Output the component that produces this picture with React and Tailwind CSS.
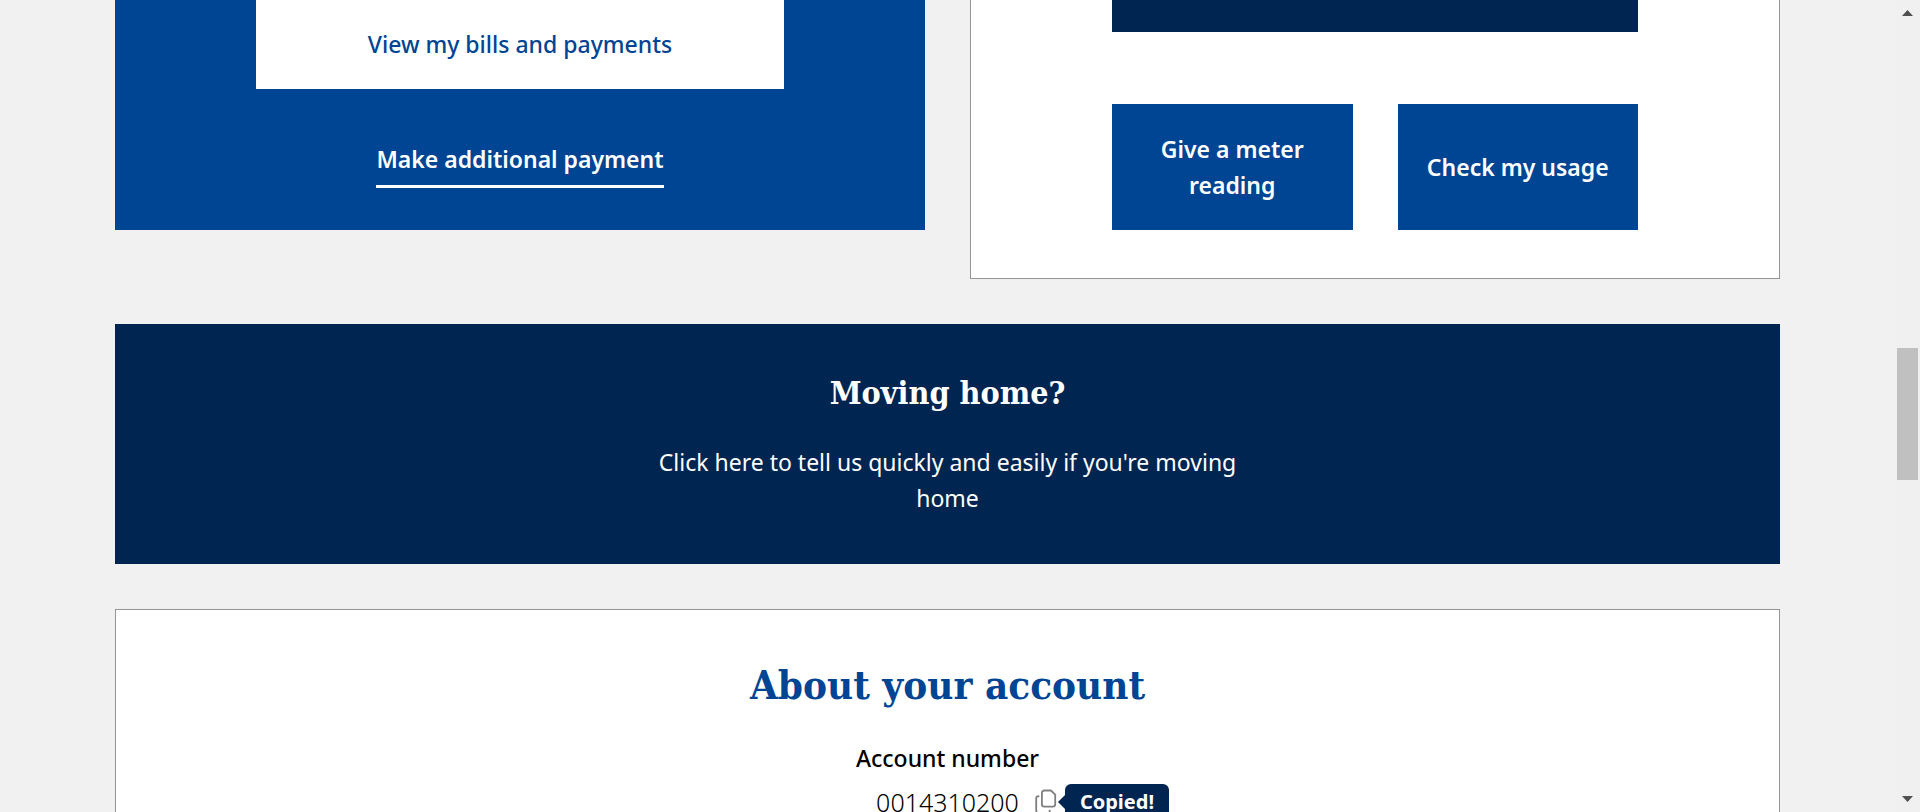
const HEADING = "font-['DejaVu_Serif_Condensed','DejaVu_Serif',serif] font-bold";

function UsageButton({ children }) {
  return (
    <button
      type="button"
      className="cursor-pointer bg-[#004494] px-4 py-[27px] font-semibold text-white"
    >
      {children}
    </button>
  );
}

function CopyIcon() {
  return (
    <svg
      viewBox="0 0 22 26"
      className="h-[26px] w-[22px]"
      fill="none"
      stroke="#808080"
      strokeWidth="1.8"
      strokeLinejoin="round"
      strokeLinecap="round"
      aria-hidden="true"
    >
      <path d="M9.300 1.500h6.700l4.200 4.200v9.500a2.400 2.400 0 0 1-2.400 2.400H9.300a2.400 2.400 0 0 1-2.400-2.400V3.900a2.400 2.400 0 0 1 2.400-2.400z" />
      <path d="M3.600 7.200A2.400 2.400 0 0 0 1.200 9.600v12a2.400 2.400 0 0 0 2.400 2.400h8.800a2.400 2.400 0 0 0 2.400-2.400" />
    </svg>
  );
}

function Scrollbar() {
  return (
    <div className="flex w-[25px] shrink-0 flex-col items-center justify-between bg-[#f0f0f0] py-[10px]" aria-hidden="true">
      <svg width="11" height="6" viewBox="0 0 11 6" className="shrink-0" fill="#505050">
        <path d="M5.500 0L11 6H0z" />
      </svg>
      <div className="flex w-full flex-1 flex-col px-[2px]">
        <div className="grow-[332]" />
        <div className="h-[132px] w-[21px] bg-[#c0c0c0]" />
        <div className="grow-[316]" />
      </div>
      <svg width="11" height="6" viewBox="0 0 11 6" className="shrink-0" fill="#505050">
        <path d="M0 0h11L5.500 6z" />
      </svg>
    </div>
  );
}

export default function App() {
  return (
    <div className="flex h-screen bg-[#f1f1f1] font-['Noto_Sans',sans-serif] text-[23px] leading-9 text-black">
      <main className="flex min-w-0 flex-1 flex-col gap-[45px] overflow-hidden px-[115px]">
        <div className="grid shrink-0 grid-cols-2 items-start gap-[45px]">
          <section className="flex flex-col items-center gap-[52px] bg-[#004494] px-[141px] pb-[42px]">
            <button
              type="button"
              className="w-full cursor-pointer bg-white pt-[26px] pb-[27px] font-medium text-[#004494]"
            >
              View my bills and payments
            </button>
            <a href="#payment" className="border-b-[3px] border-white pb-2 font-semibold text-white">
              Make additional payment
            </a>
          </section>
          <section className="flex flex-col gap-[72px] border border-t-0 border-[#969696] bg-white px-[141px] pb-12">
            <div className="h-8 bg-[#002550]" />
            <div className="grid grid-cols-2 gap-[45px]">
              <UsageButton>
                Give a meter
                <br />
                reading
              </UsageButton>
              <UsageButton>Check my usage</UsageButton>
            </div>
          </section>
        </div>

        <a
          href="#moving"
          className="flex shrink-0 flex-col items-center gap-[27px] bg-[#002550] pt-[45px] pb-12 text-center text-white"
        >
          <h2 className={`${HEADING} text-[32px] leading-[48px]`}>Moving home?</h2>
          <p className="max-w-[600px]">Click here to tell us quickly and easily if you're moving home</p>
        </a>

        <section className="shrink-0 border border-[#969696] bg-white pt-[45px] pb-12 text-center">
          <h2 className={`${HEADING} text-[40px] leading-[60px] text-[#004494]`}>About your account</h2>
          <dl className="mt-[25px]">
            <dt className="font-medium">Account number</dt>
            <dd className="mt-2 grid grid-cols-[1fr_auto_1fr] items-center">
              <span className="col-start-2 text-[25px] font-light">0014310200</span>
              <span className="flex items-center pl-4">
                <button type="button" aria-label="Copy account number" className="flex cursor-pointer">
                  <CopyIcon />
                </button>
                <span role="status" className="flex items-center">
                  <svg width="8" height="14" viewBox="0 0 8 14" fill="#002550" aria-hidden="true">
                    <path d="M8 0v14L1 7z" />
                  </svg>
                  <span className="rounded-md bg-[#002550] px-[15px] text-xl leading-9 font-bold text-white">
                    Copied!
                  </span>
                </span>
              </span>
            </dd>
          </dl>
        </section>
      </main>
      <Scrollbar />
    </div>
  );
}
